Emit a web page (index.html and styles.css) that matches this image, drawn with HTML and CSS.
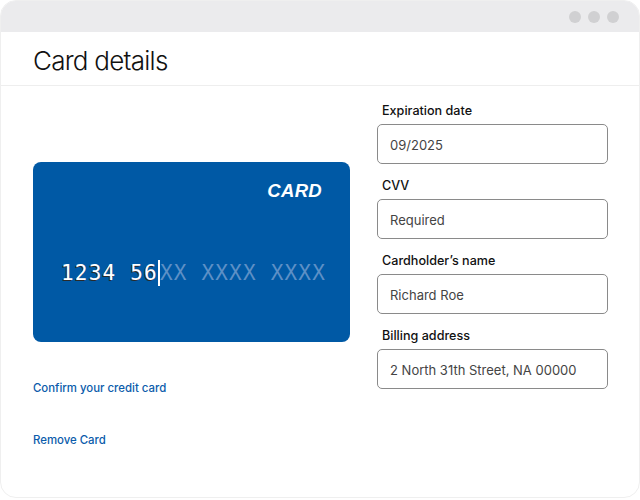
FILE: index.html
```html
<!DOCTYPE html>
<html>
<head>
<meta charset="utf-8">
<link rel="stylesheet" href="styles.css">
</head>
<body>
<div class="window">
  <div class="titlebar">
    <span class="dot"></span><span class="dot"></span><span class="dot"></span>
  </div>
  <div class="header"><h1 class="title">Card details</h1></div>
  <div class="content">
    <div class="left">
      <div class="card">
        <div class="brand">CARD</div>
        <div class="number"><span class="typed">1234 56</span><span class="caret"></span><span class="rest">XX XXXX XXXX</span></div>
      </div>
      <a class="link first">Confirm your credit card</a>
      <a class="link second">Remove Card</a>
    </div>
    <div class="right">
      <div class="field">
        <div class="label">Expiration date</div>
        <div class="input">09/2025</div>
      </div>
      <div class="field">
        <div class="label">CVV</div>
        <div class="input">Required</div>
      </div>
      <div class="field">
        <div class="label">Cardholder’s name</div>
        <div class="input">Richard Roe</div>
      </div>
      <div class="field">
        <div class="label">Billing address</div>
        <div class="input">2 North 31th Street, NA 00000</div>
      </div>
    </div>
  </div>
</div>
</body>
</html>
```
FILE: styles.css
```css
* { box-sizing: border-box; }
html, body { margin: 0; padding: 0; background: #fff; }
body { font-family: Inter, "Liberation Sans", sans-serif; }
.window {
  width: 640px;
  height: 498px;
  border: 1px solid #efefef;
  border-radius: 16px;
  overflow: hidden;
  background: #fff;
}
.titlebar {
  height: 31px;
  background: #ebebed;
  display: flex;
  justify-content: flex-end;
  align-items: center;
  gap: 7px;
  padding-right: 20px;
}
.dot {
  width: 12px;
  height: 12px;
  border-radius: 50%;
  background: #d0d0d2;
}
.header {
  height: 54px;
  border-bottom: 1px solid #eeeeee;
  padding-left: 32px;
  padding-top: 3px;
  display: flex;
  align-items: center;
}
.title {
  margin: 0;
  font-size: 26px;
  font-weight: 300;
  color: #111;
  letter-spacing: -0.75px;
}
.content {
  display: flex;
  padding-left: 32px;
  gap: 27px;
}
.left {
  width: 317px;
  display: flex;
  flex-direction: column;
  padding-top: 76px;
}
.card {
  height: 180px;
  background: #0059a5;
  border-radius: 8px;
  padding: 18px 28px 0 28px;
  display: flex;
  flex-direction: column;
}
.brand {
  align-self: flex-end;
  color: #fff;
  font-family: "Liberation Sans", Arial, sans-serif;
  font-weight: 700;
  font-style: italic;
  font-size: 18.5px;
  letter-spacing: 0.3px;
}
.number {
  margin-top: 58px;
  margin-right: -12px;
  font-family: "DejaVu Sans Mono", monospace;
  font-size: 21px;
  letter-spacing: 1.2px;
  display: flex;
  align-items: center;
  white-space: pre;
}
.typed {
  color: #fff;
  text-shadow: -1px 1px 0 #2a2a2a;
}
.caret {
  flex-shrink: 0;
  width: 2px;
  height: 26px;
  background: #fff;
  margin-left: 0;
}
.rest {
  color: #5d90c6;
}
.link {
  color: #0b5cab;
  font-size: 11.4px;
  font-weight: 500;
  display: block;
}
.first { margin-top: 39px; }
.second { margin-top: 38px; }
.right {
  width: 231px;
  display: flex;
  flex-direction: column;
  gap: 13px;
  padding-top: 16px;
}
.field {
  display: flex;
  flex-direction: column;
  gap: 4px;
}
.label {
  font-size: 12.6px;
  font-weight: 500;
  color: #111;
  padding-left: 5px;
  line-height: 18px;
}
.input {
  height: 40px;
  border: 1px solid #8a8a8a;
  border-radius: 5px;
  padding: 2px 0 0 12px;
  display: flex;
  align-items: center;
  font-size: 13px;
  color: #444;
}
```
